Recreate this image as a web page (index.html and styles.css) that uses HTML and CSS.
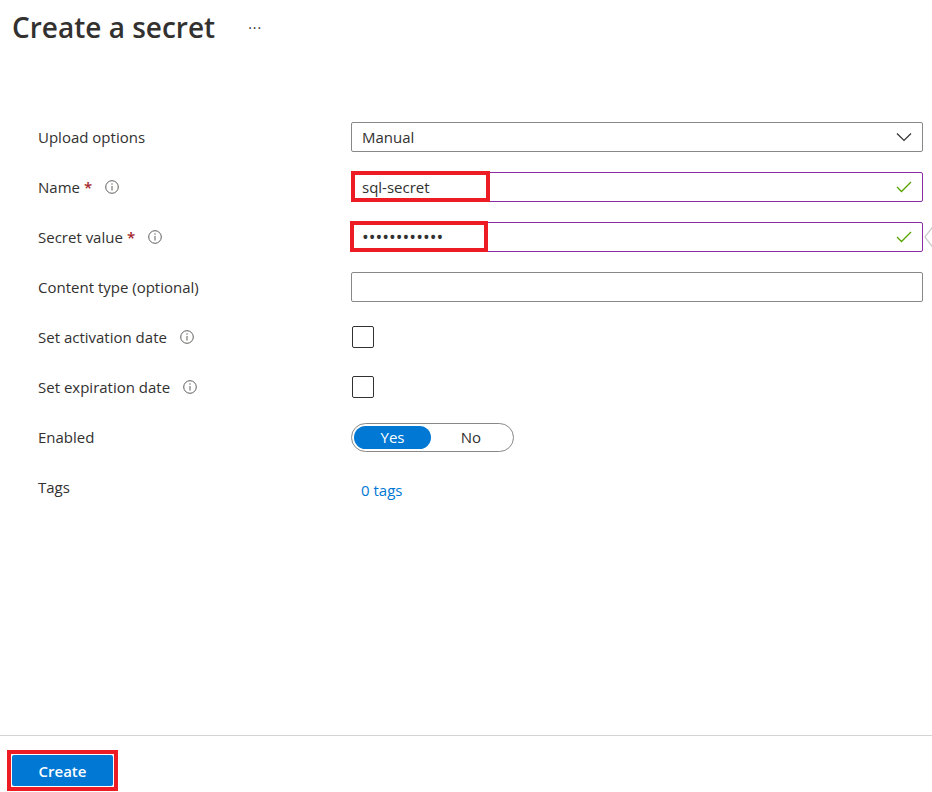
FILE: index.html
```html
<!DOCTYPE html>
<html>
<head>
<meta charset="utf-8">
<link rel="stylesheet" href="styles.css">
</head>
<body>
<div class="page">
  <header class="header">
    <h1 class="title">Create a secret</h1>
    <span class="more">···</span>
  </header>
  <main class="form">
    <div class="row">
      <div class="label">Upload options</div>
      <div class="control">
        <div class="select">
          <span>Manual</span>
          <svg class="chev" width="16" height="10" viewBox="0 0 16 10"><path d="M1 1.5 L8 8.5 L15 1.5" fill="none" stroke="#323130" stroke-width="1.2"/></svg>
        </div>
      </div>
    </div>
    <div class="row">
      <div class="label">Name <span class="req">*</span>
        <svg class="info" width="14" height="14" viewBox="0 0 14 14"><circle cx="7" cy="7" r="6.3" fill="none" stroke="#605e5c" stroke-width="1"/><path d="M7 6 V10.5" stroke="#605e5c" stroke-width="1"/><circle cx="7" cy="4" r="0.7" fill="#605e5c"/></svg>
      </div>
      <div class="control">
        <div class="input valid">
          <span>sql-secret</span>
          <svg class="check" width="16" height="12" viewBox="0 0 16 12"><path d="M1 6 L5.5 10.5 L15 1" fill="none" stroke="#57a300" stroke-width="1.3"/></svg>
        </div>
        <div class="mark mark-name"></div>
      </div>
    </div>
    <div class="row">
      <div class="label">Secret value <span class="req">*</span>
        <svg class="info" width="14" height="14" viewBox="0 0 14 14"><circle cx="7" cy="7" r="6.3" fill="none" stroke="#605e5c" stroke-width="1"/><path d="M7 6 V10.5" stroke="#605e5c" stroke-width="1"/><circle cx="7" cy="4" r="0.7" fill="#605e5c"/></svg>
      </div>
      <div class="control">
        <div class="input valid">
          <span class="dots">••••••••••••</span>
          <svg class="check" width="16" height="12" viewBox="0 0 16 12"><path d="M1 6 L5.5 10.5 L15 1" fill="none" stroke="#57a300" stroke-width="1.3"/></svg>
        </div>
        <div class="mark mark-secret"></div>
        <svg class="callout" width="10" height="26" viewBox="0 0 10 26"><path d="M10 1 L1 13 L10 25" fill="#fff" stroke="#c8c6c4" stroke-width="1.2"/></svg>
      </div>
    </div>
    <div class="row">
      <div class="label">Content type (optional)</div>
      <div class="control">
        <div class="input"></div>
      </div>
    </div>
    <div class="row">
      <div class="label">Set activation date
        <svg class="info gap" width="14" height="14" viewBox="0 0 14 14"><circle cx="7" cy="7" r="6.3" fill="none" stroke="#605e5c" stroke-width="1"/><path d="M7 6 V10.5" stroke="#605e5c" stroke-width="1"/><circle cx="7" cy="4" r="0.7" fill="#605e5c"/></svg>
      </div>
      <div class="control"><div class="checkbox"></div></div>
    </div>
    <div class="row">
      <div class="label">Set expiration date
        <svg class="info gap" width="14" height="14" viewBox="0 0 14 14"><circle cx="7" cy="7" r="6.3" fill="none" stroke="#605e5c" stroke-width="1"/><path d="M7 6 V10.5" stroke="#605e5c" stroke-width="1"/><circle cx="7" cy="4" r="0.7" fill="#605e5c"/></svg>
      </div>
      <div class="control"><div class="checkbox"></div></div>
    </div>
    <div class="row">
      <div class="label">Enabled</div>
      <div class="control">
        <div class="toggle">
          <span class="opt on">Yes</span>
          <span class="opt">No</span>
        </div>
      </div>
    </div>
    <div class="row">
      <div class="label">Tags</div>
      <div class="control"><a class="link">0 tags</a></div>
    </div>
  </main>
  <footer class="footer">
    <div class="btn-wrap">
      <button class="btn">Create</button>
    </div>
  </footer>
</div>
</body>
</html>
```

FILE: styles.css
```css
* { box-sizing: border-box; }
html, body { margin: 0; padding: 0; background: #fff; }
body {
  font-family: "Open Sans", "Noto Sans", sans-serif;
  color: #323130;
  width: 932px;
  height: 792px;
  overflow: hidden;
}
.page {
  display: flex;
  flex-direction: column;
  height: 792px;
}
.header {
  display: flex;
  align-items: center;
  padding: 4px 0 0 12px;
  height: 56px;
}
.title {
  margin: 0;
  font-size: 28px;
  font-weight: 600;
  line-height: 38px;
  color: #323130;
  align-self: flex-start;
  margin-top: 4px;
}
.more {
  margin-left: 33px;
  font-size: 14px;
  color: #323130;
  letter-spacing: 1px;
  align-self: flex-start;
  margin-top: 14px;
}
.form {
  flex: 1;
  padding: 56px 9px 0 38px;
}
.row {
  display: grid;
  grid-template-columns: 313px 572px;
  height: 50px;
  align-items: center;
}
.label {
  font-size: 15px;
  display: flex;
  align-items: center;
  white-space: nowrap;
}
.req {
  color: #a4262c;
  margin-left: 4px;
  font-weight: 600;
}
.info { margin-left: 13px; }
.control {
  position: relative;
  display: flex;
  align-items: center;
}
.select, .input {
  width: 572px;
  height: 30px;
  border: 1px solid #8a8886;
  border-radius: 2px;
  display: flex;
  align-items: center;
  justify-content: space-between;
  padding: 0 10px;
  font-size: 15px;
  color: #323130;
}
.input.valid { border-color: #8a2da5; }
.dots { font-size: 18px; letter-spacing: 0; line-height: 1; }
.mark {
  position: absolute;
  top: -1px;
  left: 0;
  height: 31px;
  border: 4px solid #ed1c24;
}
.mark-name { width: 139px; }
.mark-secret { width: 138px; left: -1px; }
.callout {
  position: absolute;
  right: -11px;
  top: 2px;
}
.checkbox {
  width: 22px;
  height: 22px;
  border: 1px solid #323130;
  border-radius: 2px;
  margin-left: 1px;
}
.toggle {
  width: 163px;
  height: 29px;
  border: 1px solid #8a8886;
  border-radius: 15px;
  display: flex;
  align-items: center;
  padding: 0 2px;
}
.opt {
  width: 77px;
  height: 23px;
  border-radius: 12px;
  display: flex;
  align-items: center;
  justify-content: center;
  font-size: 15px;
  color: #323130;
}
.opt.on { background: #0078d4; color: #fff; }
.opt + .opt { flex: 1; }
.link {
  color: #0078d4;
  font-size: 15px;
  margin-left: 10px;
  padding-top: 6px;
}
.footer {
  border-top: 1px solid #d4d4d4;
  height: 57px;
  padding: 14px 0 0 7px;
}
.btn-wrap {
  display: inline-block;
  border: 4px solid #ed1c24;
  padding: 1px;
}
.btn {
  display: block;
  width: 101px;
  height: 31px;
  background: #0078d4;
  border: none;
  border-radius: 2px;
  color: #fff;
  font-family: "Open Sans", "Noto Sans", sans-serif;
  font-weight: 600;
  font-size: 15px;
  padding: 0;
}
```
